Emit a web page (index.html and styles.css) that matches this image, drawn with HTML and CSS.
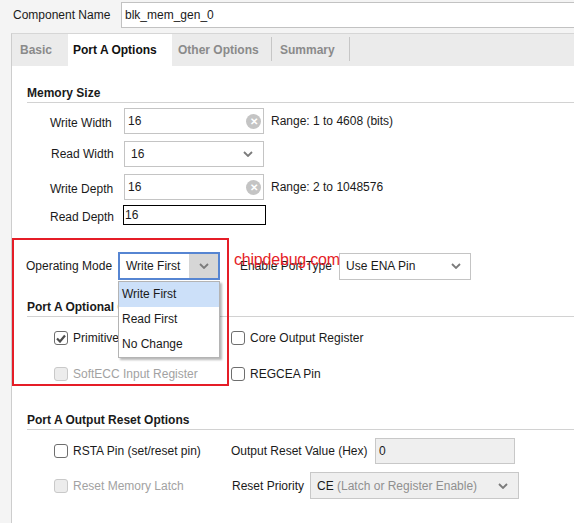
FILE: index.html
```html
<!DOCTYPE html>
<html lang="en">
<head>
  <meta charset="UTF-8">
  <title>Block Memory Generator</title>
  <link rel="stylesheet" href="styles.css">
</head>
<body>
  <div class="top">
    <div class="top-label">Component Name</div>
    <div class="top-input">blk_mem_gen_0</div>
  </div>

  <div class="panel">
    <div class="tabs">
      <div class="tab tab-basic">Basic</div>
      <div class="tab tab-active">Port A Options</div>
      <div class="tab tab-other">Other Options</div>
      <div class="tab tab-summary">Summary</div>
    </div>

    <div class="content">
      <div class="section-title">Memory Size</div>

      <div class="mem-row first">
        <div class="mem-label">Write Width</div>
        <div class="box"><span class="val">16</span><span class="clear">&#x2715;</span></div>
        <div class="range">Range: 1 to 4608 (bits)</div>
      </div>
      <div class="mem-row">
        <div class="mem-label shift">Read Width</div>
        <div class="box combo"><span class="val">16</span>
          <svg class="chev" width="10" height="6" viewBox="0 0 10 6"><path d="M1 1 L5 5 L9 1" /></svg>
        </div>
      </div>
      <div class="mem-row">
        <div class="mem-label">Write Depth</div>
        <div class="box"><span class="val">16</span><span class="clear">&#x2715;</span></div>
        <div class="range">Range: 2 to 1048576</div>
      </div>
      <div class="mem-row last">
        <div class="mem-label">Read Depth</div>
        <div class="box plain">16</div>
      </div>

      <div class="mode-row">
        <div class="mode-label">Operating Mode</div>
        <div class="mode-select">
          <span class="val">Write First</span>
          <span class="mode-arrow">
            <svg class="chev" width="10" height="6" viewBox="0 0 10 6"><path d="M1 1 L5 5 L9 1" /></svg>
          </span>
          <div class="menu">
            <div class="menu-item selected">Write First</div>
            <div class="menu-item">Read First</div>
            <div class="menu-item">No Change</div>
          </div>
        </div>
        <div class="enable-label">Enable Port Type</div>
        <div class="box combo enable">
          <span class="val">Use ENA Pin</span>
          <svg class="chev" width="10" height="6" viewBox="0 0 10 6"><path d="M1 1 L5 5 L9 1" /></svg>
        </div>
      </div>

      <div class="section-title second">Port A Optional Output Registers</div>

      <div class="check-grid">
        <div class="check">
          <span class="cb checked">
            <svg width="10" height="9" viewBox="0 0 10 9"><path d="M1 4.5 L4 7.5 L9 1.5" /></svg>
          </span>
          Primitives Output Register
        </div>
        <div class="check"><span class="cb"></span>Core Output Register</div>
        <div class="check disabled"><span class="cb"></span>SoftECC Input Register</div>
        <div class="check"><span class="cb"></span>REGCEA Pin</div>
      </div>

      <div class="section-title third">Port A Output Reset Options</div>

      <div class="reset-grid">
        <div class="check"><span class="cb"></span>RSTA Pin (set/reset pin)</div>
        <div class="reset-field">
          <div class="reset-label">Output Reset Value (Hex)</div>
          <div class="box grey value">0</div>
        </div>
        <div class="check disabled"><span class="cb"></span>Reset Memory Latch</div>
        <div class="reset-field">
          <div class="reset-label priority">Reset Priority</div>
          <div class="box grey combo priority-box">
            <span class="val">CE <span class="dim">(Latch or Register Enable)</span></span>
            <svg class="chev" width="10" height="6" viewBox="0 0 10 6"><path d="M1 1 L5 5 L9 1" /></svg>
          </div>
        </div>
      </div>
    </div>
  </div>

  <div class="mark-box"></div>
  <div class="watermark">chipdebug.com</div>
</body>
</html>
```

FILE: styles.css
```css
body {
  margin: 0;
  position: relative;
  height: 523px;
  overflow: hidden;
  background: #f4f4f4;
  color: #1a1a1a;
  font-family: "Liberation Sans", Arial, sans-serif;
  font-size: 12px;
}

/* component name strip */
.top {
  display: flex;
  align-items: center;
  padding: 2px 0 0 13px;
  height: 26px;
}

.top-label {
  width: 108px;
}

.top-input {
  flex: 1;
  height: 26px;
  box-sizing: border-box;
  border: 1px solid #c2c2c2;
  border-right: none;
  background: #fff;
  padding-left: 3px;
  display: flex;
  align-items: center;
}

/* tabbed panel */
.panel {
  margin: 5px 0 0 11px;
  border-left: 1px solid #cdcdcd;
  border-top: 1px solid #d6d6d6;
  background: #fff;
  height: 500px;
}

.tabs {
  display: flex;
  height: 32px;
  background: #ebebeb;
  font-weight: bold;
  color: #8a8a8a;
}

.tab {
  display: flex;
  align-items: center;
  box-sizing: border-box;
}

.tab-basic { width: 56px; padding-left: 8px; }
.tab-active { width: 104px; padding-left: 5px; background: #fff; color: #111; }
.tab-other { width: 100px; padding-left: 6px; }
.tab-summary { width: 78px; padding-left: 8px; }

.tab-other,
.tab-summary {
  position: relative;
}

.tab-other::after,
.tab-summary::after {
  content: "";
  position: absolute;
  right: 0;
  top: 3px;
  bottom: 5px;
  border-right: 1px solid #c6c6c6;
}

.content {
  padding: 20px 0 0 15px;
}

.section-title {
  font-weight: bold;
  line-height: 14px;
  padding-bottom: 2px;
  border-bottom: 1px solid #d2d2d2;
}

.section-title.second { margin-top: 20px; }
.section-title.third { margin-top: 29px; }

/* memory size rows */
.mem-row {
  display: flex;
  align-items: center;
  height: 26px;
  margin-top: 7px;
  padding-left: 23px;
}

.mem-row.first { margin-top: 5px; }
.mem-row.last { margin-top: 5px; height: 20px; }

.mem-label {
  width: 74px;
  padding-top: 3px;
}

.mem-label.shift {
  padding: 0 0 0 1px;
  width: 73px;
}

.box {
  width: 140px;
  height: 26px;
  box-sizing: border-box;
  border: 1px solid #c4c4c4;
  background: #fff;
  display: flex;
  align-items: center;
  justify-content: space-between;
  padding: 0 2px 0 3px;
}

.box.combo {
  padding: 0 10px 0 6px;
}

.box.plain {
  width: 143px;
  height: 20px;
  margin-left: -1px;
  border-color: #000;
  padding-left: 1px;
}

.clear {
  width: 15px;
  height: 15px;
  border-radius: 50%;
  background: #c4c4c4;
  color: #fff;
  font-size: 10px;
  font-weight: bold;
  line-height: 15px;
  text-align: center;
}

.chev path {
  fill: none;
  stroke: #7b7b7b;
  stroke-width: 1.8;
}

.range {
  margin-left: 7px;
}

/* operating mode row */
.mode-row {
  display: flex;
  align-items: center;
  height: 28px;
  margin: 27px 0 0 -1px;
}

.mode-label {
  width: 92px;
}

.mode-select {
  position: relative;
  width: 102px;
  height: 28px;
  box-sizing: border-box;
  border: 2px solid #5685d2;
  display: flex;
  align-items: center;
  justify-content: space-between;
  padding-left: 6px;
}

.mode-arrow {
  width: 29px;
  height: 100%;
  background: #d6d6d6;
  display: flex;
  align-items: center;
  justify-content: center;
}

.menu {
  position: absolute;
  top: 27px;
  left: -2px;
  width: 102px;
  box-sizing: border-box;
  background: #fff;
  border: 1px solid #b4b4b4;
  box-shadow: 2px 2px 2px rgba(0, 0, 0, 0.28);
  z-index: 5;
}

.menu-item {
  height: 25px;
  line-height: 25px;
  padding-left: 3px;
}

.menu-item.selected {
  background: #cce0f9;
}

.enable-label {
  margin-left: 20px;
  width: 99px;
}

.box.enable {
  width: 132px;
  height: 27px;
  padding-right: 9px;
}

/* checkbox grids */
.check-grid,
.reset-grid {
  display: grid;
  grid-template-columns: 177px 1fr;
  padding-left: 27px;
}

.check-grid {
  margin-top: 11px;
  grid-auto-rows: 20px;
  row-gap: 16px;
}

.check {
  display: flex;
  align-items: center;
  gap: 5px;
  white-space: nowrap;
}

.cb {
  width: 14px;
  height: 14px;
  box-sizing: border-box;
  border: 1px solid #6e6e6e;
  border-radius: 3px;
  background: #fff;
  display: flex;
  align-items: center;
  justify-content: center;
}

.cb path {
  fill: none;
  stroke: #4d4d4d;
  stroke-width: 2.2;
}

.check.disabled {
  color: #a2a2a2;
}

.check.disabled .cb {
  border-color: #c9c9c9;
  background: #ececec;
}

.reset-grid {
  margin-top: 8px;
  grid-template-rows: 26px 27px;
  row-gap: 8px;
}

.reset-field {
  display: flex;
  align-items: center;
}

.reset-label {
  width: 144px;
}

.reset-label.priority {
  width: 79px;
  padding-left: 1px;
  box-sizing: border-box;
}

.box.grey {
  background: #efefef;
  border-color: #c8c8c8;
}

.box.priority-box {
  width: 209px;
  height: 27px;
}

.dim {
  color: #8f8f8f;
}

/* annotation overlays */
.mark-box {
  position: absolute;
  left: 12px;
  top: 238px;
  width: 217px;
  height: 148px;
  box-sizing: border-box;
  border: 2px solid #e51d27;
}

.watermark {
  position: absolute;
  left: 234px;
  top: 251px;
  font-size: 16px;
  line-height: 18px;
  letter-spacing: -0.2px;
  color: #e51d27;
}
```
